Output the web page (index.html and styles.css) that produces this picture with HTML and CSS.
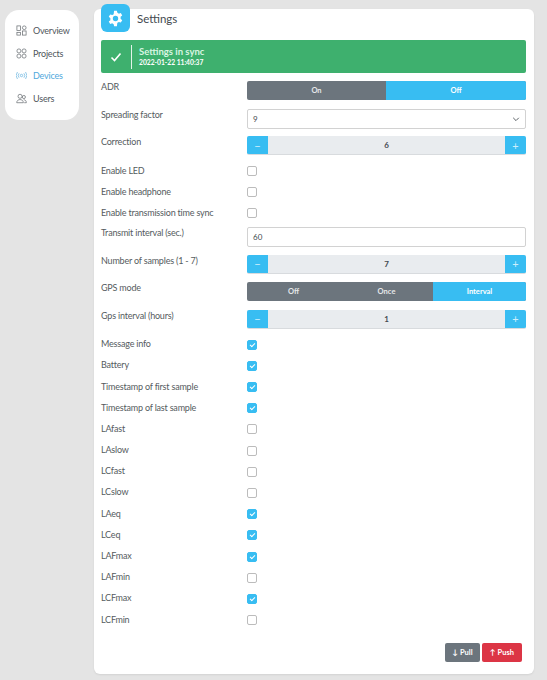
FILE: index.html
```html
<!DOCTYPE html>
<html lang="en">
<head>
    <meta charset="UTF-8">
    <meta name="viewport" content="width=device-width, initial-scale=1.0">
    <title>Settings</title>
    <link rel="stylesheet" href="styles.css">
</head>
<body>
    <nav class="sidebar">
        <a class="nav-item">
            <svg class="nav-icon" viewBox="0 0 12 12"><rect x="1" y="1" width="4" height="5"/><circle cx="9" cy="3" r="2"/><rect x="1" y="8" width="4" height="3"/><rect x="7" y="6.5" width="4" height="4.5"/></svg>
            Overview
        </a>
        <a class="nav-item">
            <svg class="nav-icon" viewBox="0 0 12 12"><circle cx="3.2" cy="3.2" r="2.2"/><circle cx="8.8" cy="3.2" r="2.2"/><circle cx="3.2" cy="8.8" r="2.2"/><circle cx="8.8" cy="8.8" r="2.2"/></svg>
            Projects
        </a>
        <a class="nav-item active">
            <svg class="nav-icon" viewBox="0 0 12 12"><circle cx="6" cy="6" r="1.3"/><path d="M3.4 3.6a3.6 3.6 0 0 0 0 4.8M8.6 3.6a3.6 3.6 0 0 1 0 4.8M1.6 2.2a6 6 0 0 0 0 7.6M10.4 2.2a6 6 0 0 1 0 7.6"/></svg>
            Devices
        </a>
        <a class="nav-item">
            <svg class="nav-icon" viewBox="0 0 12 12"><circle cx="4.4" cy="3.6" r="2.2"/><circle cx="8.6" cy="4.4" r="1.7"/><path d="M.8 10.6c0-4.6 7.2-4.6 7.2 0zM8.4 7.4c1.8 0 2.9 1.2 2.9 3.2H9"/></svg>
            Users
        </a>
    </nav>

    <main class="card">
        <div class="card-header">
            <div class="header-icon">
                <svg viewBox="0 0 24 24" width="17" height="17"><path fill="#fff" fill-rule="evenodd" d="M10 1h4l.6 3a8.2 8.2 0 0 1 2 1.2l2.9-1 2 3.5-2.3 2a8 8 0 0 1 0 2.6l2.3 2-2 3.5-2.9-1a8.2 8.2 0 0 1-2 1.2L14 23h-4l-.6-3a8.2 8.2 0 0 1-2-1.2l-2.9 1-2-3.5 2.3-2a8 8 0 0 1 0-2.6l-2.3-2 2-3.5 2.9 1a8.2 8.2 0 0 1 2-1.2zM12 8.2a3.8 3.8 0 1 0 0 7.6 3.8 3.8 0 0 0 0-7.6z"/></svg>
            </div>
            <h2>Settings</h2>
        </div>

        <div class="alert">
            <svg class="alert-check" viewBox="0 0 12 12" width="12" height="12"><path d="M1.5 6.5l3 3 6-7"/></svg>
            <div class="alert-text">
                <strong>Settings in sync</strong>
                <small>2022-01-22 11:40:37</small>
            </div>
        </div>

        <div class="form-rows">
            <div class="control-row">
                <label>ADR</label>
                <div class="toggle two">
                    <span>On</span>
                    <span class="on">Off</span>
                </div>
            </div>
            <div class="control-row">
                <label>Spreading factor</label>
                <div class="field select">
                    <span>9</span>
                    <svg viewBox="0 0 10 10" width="8" height="8"><path d="M1.5 3.5L5 7l3.5-3.5"/></svg>
                </div>
            </div>
            <div class="control-row">
                <label>Correction</label>
                <div class="stepper"><button>&minus;</button><span>6</span><button>+</button></div>
            </div>

            <div class="check-group">
                <div class="check-row"><label>Enable LED</label><i class="box"></i></div>
                <div class="check-row"><label>Enable headphone</label><i class="box"></i></div>
                <div class="check-row"><label>Enable transmission time sync</label><i class="box"></i></div>
            </div>

            <div class="control-row">
                <label>Transmit interval (sec.)</label>
                <div class="field"><span>60</span></div>
            </div>
            <div class="control-row">
                <label>Number of samples (1 - 7)</label>
                <div class="stepper"><button>&minus;</button><span>7</span><button>+</button></div>
            </div>
            <div class="control-row">
                <label>GPS mode</label>
                <div class="toggle three">
                    <span>Off</span>
                    <span>Once</span>
                    <span class="on">Interval</span>
                </div>
            </div>
            <div class="control-row">
                <label>Gps interval (hours)</label>
                <div class="stepper"><button>&minus;</button><span>1</span><button>+</button></div>
            </div>

            <div class="check-list">
                <div class="check-row"><label>Message info</label><i class="box checked"></i></div>
                <div class="check-row"><label>Battery</label><i class="box checked"></i></div>
                <div class="check-row"><label>Timestamp of first sample</label><i class="box checked"></i></div>
                <div class="check-row"><label>Timestamp of last sample</label><i class="box checked"></i></div>
                <div class="check-row"><label>LAfast</label><i class="box"></i></div>
                <div class="check-row"><label>LAslow</label><i class="box"></i></div>
                <div class="check-row"><label>LCfast</label><i class="box"></i></div>
                <div class="check-row"><label>LCslow</label><i class="box"></i></div>
                <div class="check-row"><label>LAeq</label><i class="box checked"></i></div>
                <div class="check-row"><label>LCeq</label><i class="box checked"></i></div>
                <div class="check-row"><label>LAFmax</label><i class="box checked"></i></div>
                <div class="check-row"><label>LAFmin</label><i class="box"></i></div>
                <div class="check-row"><label>LCFmax</label><i class="box checked"></i></div>
                <div class="check-row"><label>LCFmin</label><i class="box"></i></div>
            </div>
        </div>

        <div class="card-actions">
            <button class="action pull">&darr; Pull</button>
            <button class="action push">&uarr; Push</button>
        </div>
    </main>
</body>
</html>
```

FILE: styles.css
```css
html, body {
    height: 100%;
}

body {
    margin: 0;
    background-color: #e4e4e4;
    color: #555b60;
    font-family: "Lato", "Liberation Sans", sans-serif;
    font-size: 9px;
    letter-spacing: -0.2px;
    display: flex;
    align-items: flex-start;
    overflow: hidden;
}

.sidebar {
    width: 74px;
    height: 110px;
    box-sizing: border-box;
    margin: 10px 0 0 5px;
    padding: 9px 0 0 11px;
    background-color: white;
    border-radius: 14px;
}

.nav-item {
    height: 22.7px;
    display: flex;
    align-items: center;
    gap: 6px;
    color: #50565c;
}

.nav-item.active {
    color: #4fa8dc;
}

.nav-icon {
    width: 11px;
    height: 11px;
    flex-shrink: 0;
    fill: none;
    stroke: currentColor;
    stroke-width: 0.8;
    opacity: 0.85;
}

.card {
    width: 440px;
    height: 665px;
    box-sizing: border-box;
    margin: 9px 0 0 15px;
    padding: 0 8px 0 7px;
    background-color: white;
    border-radius: 6px;
    box-shadow: 0 1px 2px rgba(0, 0, 0, 0.08);
    display: flex;
    flex-direction: column;
}

.card-header {
    display: flex;
    align-items: center;
    gap: 7px;
    margin-top: -5px;
    height: 28px;
}

.header-icon {
    width: 29px;
    height: 28px;
    background-color: #38bdf2;
    border-radius: 6px;
    display: flex;
    align-items: center;
    justify-content: center;
}

.card-header h2 {
    margin: 0;
    font-size: 11.5px;
    font-weight: 400;
    letter-spacing: 0;
    color: #444a50;
}

.alert {
    height: 33px;
    margin-top: 8px;
    background-color: #3eb06e;
    border-radius: 2px;
    display: flex;
    align-items: center;
    color: white;
}

.alert-check {
    margin-left: 9px;
    fill: none;
    stroke: white;
    stroke-width: 1.6;
}

.alert-text {
    margin-left: 9px;
    padding-left: 7px;
    height: 24px;
    border-left: 1px solid rgba(255, 255, 255, 0.85);
    display: flex;
    flex-direction: column;
    justify-content: center;
    letter-spacing: 0;
}

.alert-text strong {
    font-size: 9.5px;
    line-height: 12px;
    color: #d8f5e2;
}

.alert-text small {
    font-size: 6.7px;
    font-weight: 700;
    line-height: 9px;
}

.form-rows {
    margin-top: 8px;
}

.control-row {
    display: grid;
    grid-template-columns: 146px 1fr;
    height: 27.5px;
}

.control-row label {
    line-height: 11px;
}

.check-row {
    display: grid;
    grid-template-columns: 146px 1fr;
    height: 21.2px;
    align-items: center;
}

.check-row label {
    margin-top: -2px;
}

.check-group {
    margin: -3px 0 3px;
}

.check-list {
    margin-top: -3px;
}

.box {
    display: block;
    width: 8px;
    height: 8px;
    border: 1px solid #bcbcbc;
    border-radius: 2px;
}

.box.checked {
    background-color: #38bdf2;
    border-color: #38bdf2;
    position: relative;
}

.box.checked::after {
    content: "";
    position: absolute;
    left: 2.5px;
    top: 1px;
    width: 2px;
    height: 4px;
    border: solid white;
    border-width: 0 1.2px 1.2px 0;
    transform: rotate(45deg);
}

.toggle {
    height: 19px;
    display: grid;
    border-radius: 2px;
    overflow: hidden;
    background-color: #6c757d;
    font-size: 7.5px;
    font-weight: 700;
    letter-spacing: 0;
    color: #e6e8ea;
}

.toggle.two {
    grid-template-columns: 139px 1fr;
}

.toggle.three {
    grid-template-columns: 93px 93px 1fr;
}

.toggle span {
    display: flex;
    align-items: center;
    justify-content: center;
}

.toggle .on {
    background-color: #38bdf2;
    color: white;
}

.field {
    height: 20px;
    box-sizing: border-box;
    border: 1px solid #d2d2d2;
    border-radius: 2px;
    padding: 0 5px;
    display: flex;
    align-items: center;
    justify-content: space-between;
    background-color: white;
    font-size: 8px;
    letter-spacing: 0;
    color: #444a50;
}

.select svg {
    fill: none;
    stroke: #555b60;
    stroke-width: 1.2;
}

.stepper {
    height: 19px;
    box-sizing: border-box;
    border-bottom: 1px solid #d8dbde;
    display: grid;
    grid-template-columns: 21px 1fr 21px;
    background-color: #e9ecef;
    border-radius: 2px;
    overflow: hidden;
    font-size: 8px;
    font-weight: 700;
    letter-spacing: 0;
    color: #444a50;
}

.stepper button {
    border: none;
    padding: 0;
    background-color: #38bdf2;
    color: #cdeefc;
    font-family: inherit;
    font-size: 11px;
}

.stepper span {
    display: flex;
    align-items: center;
    justify-content: center;
}

.card-actions {
    margin-top: auto;
    margin-bottom: 12px;
    padding-right: 4px;
    display: flex;
    justify-content: flex-end;
    gap: 2px;
}

.action {
    height: 19px;
    border: none;
    border-radius: 2px;
    padding: 0;
    color: white;
    font-family: inherit;
    font-size: 7.5px;
    font-weight: 700;
}

.pull {
    width: 35px;
    background-color: #6c757d;
}

.push {
    width: 40px;
    background-color: #dc3545;
}
```
